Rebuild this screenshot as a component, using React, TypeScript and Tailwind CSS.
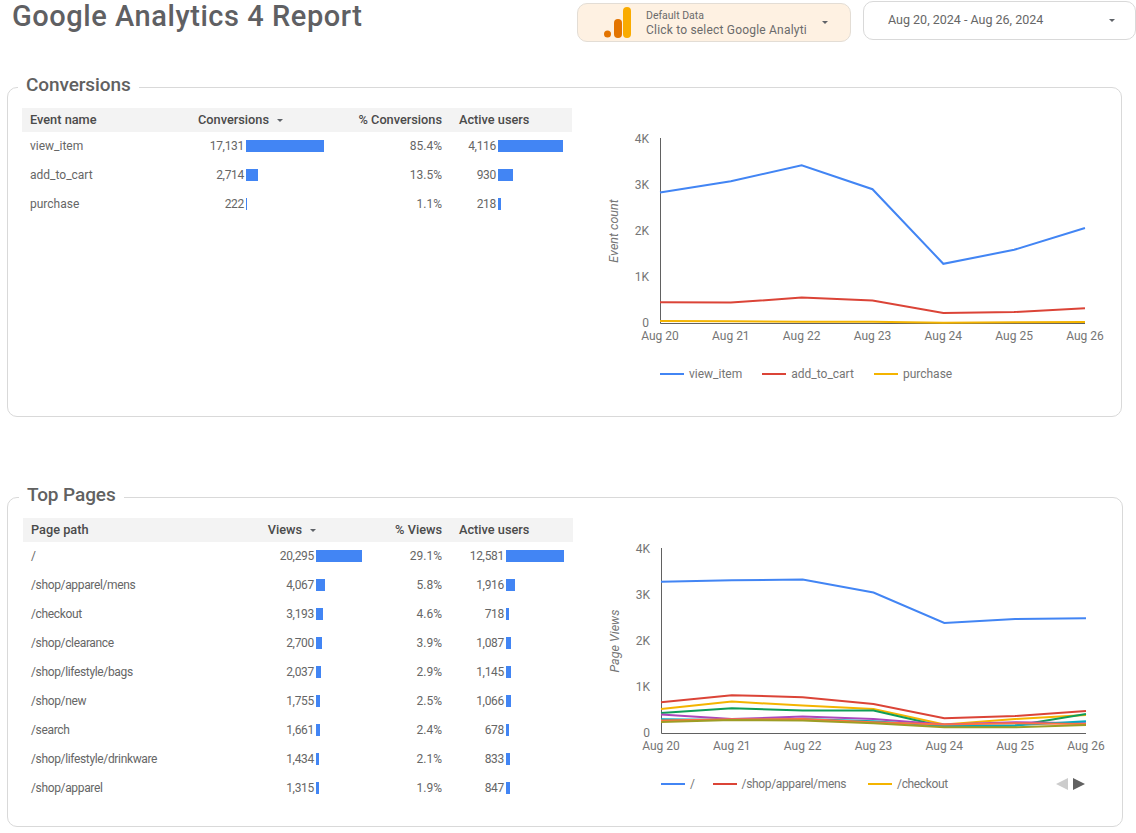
const font = "font-['Roboto','Liberation_Sans',sans-serif]";

const seriesColors = ['#4285f4', '#db4437', '#f4b400', '#0f9d58', '#ab47bc', '#00acc1', '#ff7043', '#9e9d24'];
const days = ['Aug 20', 'Aug 21', 'Aug 22', 'Aug 23', 'Aug 24', 'Aug 25', 'Aug 26'];
const ticks = ['4K', '3K', '2K', '1K', '0'];

const conversionRows = [
  { name: 'view_item', value: 17131, pct: '85.4%', users: 4116 },
  { name: 'add_to_cart', value: 2714, pct: '13.5%', users: 930 },
  { name: 'purchase', value: 222, pct: '1.1%', users: 218 },
];

const pageRows = [
  { name: '/', value: 20295, pct: '29.1%', users: 12581 },
  { name: '/shop/apparel/mens', value: 4067, pct: '5.8%', users: 1916 },
  { name: '/checkout', value: 3193, pct: '4.6%', users: 718 },
  { name: '/shop/clearance', value: 2700, pct: '3.9%', users: 1087 },
  { name: '/shop/lifestyle/bags', value: 2037, pct: '2.9%', users: 1145 },
  { name: '/shop/new', value: 1755, pct: '2.5%', users: 1066 },
  { name: '/search', value: 1661, pct: '2.4%', users: 678 },
  { name: '/shop/lifestyle/drinkware', value: 1434, pct: '2.1%', users: 833 },
  { name: '/shop/apparel', value: 1315, pct: '1.9%', users: 847 },
];

// y positions inside the chart svg, one per day
const conversionSeries = [
  [72.6, 61.2, 45.2, 69.2, 143.8, 129.8, 108],
  [182.3, 182.6, 177.6, 180.6, 193, 192, 188.3],
  [201, 201.3, 201.7, 201.7, 202.7, 202.3, 202],
];

const pageSeries = [
  [51.8, 50.2, 49.5, 62.5, 93, 89, 88.3],
  [172.2, 165.2, 167.2, 173.9, 188.3, 186, 180.9],
  [178.9, 171.6, 175.6, 178.9, 194.6, 189, 185],
  [183, 178.3, 180.6, 180.6, 196.7, 195.7, 184],
  [184.6, 189, 186.6, 189, 194.6, 192.3, 193.3],
  [189.3, 190, 189, 191.3, 196, 195.3, 191.3],
  [190.6, 189.3, 189, 192.3, 194.6, 193.3, 194],
  [192, 190, 190.6, 193.3, 197.3, 197.3, 195],
];

function Caret({ className = '' }: { className?: string }) {
  return (
    <svg width="6" height="3" viewBox="0 0 6 3" className={className}>
      <path d="M0 0h6L3 3z" fill="#5f6368" />
    </svg>
  );
}

function Bar({ value, max, full }: { value: number; max: number; full: number }) {
  return <div className="h-3 bg-[#4285f4]" style={{ width: Math.max(1, (value / max) * full) }} />;
}

type Row = { name: string; value: number; pct: string; users: number };

function ReportTable(props: {
  rows: Row[];
  nameLabel: string;
  valueLabel: string;
  pctLabel: string;
  headCols: string;
  rowCols: string;
  nameClass?: string;
  valueFull: number;
  usersFull: number;
}) {
  const maxValue = Math.max(...props.rows.map((r) => r.value));
  const maxUsers = Math.max(...props.rows.map((r) => r.users));
  return (
    <div className="w-[550px] shrink-0">
      <div className={`grid h-6 items-center bg-[#f3f3f3] text-[12.75px] font-medium text-[#4a4a4a] ${props.headCols}`}>
        <div className="pl-2">{props.nameLabel}</div>
        <div className="flex items-center justify-end gap-2 pr-px">
          {props.valueLabel}
          <Caret />
        </div>
        <div className="text-right">{props.pctLabel}</div>
        <div className="pl-[17px]">Active users</div>
      </div>
      {props.rows.map((r) => (
        <div key={r.name} className={`grid h-[29px] items-start text-[12px] leading-7 text-[#666] ${props.rowCols}`}>
          <div className={`pl-2 ${props.nameClass ?? ''}`}>{r.name}</div>
          <div className="text-right tracking-[-0.3px]">{r.value.toLocaleString('en-US')}</div>
          <div className="pt-2 pl-[2px]">
            <Bar value={r.value} max={maxValue} full={props.valueFull} />
          </div>
          <div className="text-right">{r.pct}</div>
          <div className="text-right tracking-[-0.3px]">{r.users.toLocaleString('en-US')}</div>
          <div className="pt-2 pl-[2px]">
            <Bar value={r.users} max={maxUsers} full={props.usersFull} />
          </div>
        </div>
      ))}
    </div>
  );
}

function LineChart({ series, axisLabel }: { series: number[][]; axisLabel: string }) {
  const xAt = (i: number) => 60 + i * 70.83;
  return (
    <svg width="522" height="230" className="block">
      {ticks.map((t, i) => (
        <text key={t} x="49" y={19 + i * 46 + 4} textAnchor="end" fontSize="12" fill="#757575" fontFamily="Roboto">
          {t}
        </text>
      ))}
      {days.map((d, i) => (
        <text key={d} x={xAt(i)} y="220" textAnchor="middle" fontSize="12" fill="#757575" fontFamily="Roboto">
          {d}
        </text>
      ))}
      <text
        transform="translate(18 111) rotate(-90)"
        textAnchor="middle"
        fontSize="12.5"
        fontStyle="italic"
        fill="#757575"
        fontFamily="Roboto"
      >
        {axisLabel}
      </text>
      <path d="M60.5 18V203.5H485" fill="none" stroke="#616161" strokeWidth="1" />
      {series.map((ys, s) => (
        <polyline
          key={s}
          points={ys.map((y, i) => `${xAt(i)},${y}`).join(' ')}
          fill="none"
          stroke={seriesColors[s]}
          strokeWidth="2"
        />
      ))}
    </svg>
  );
}

function LegendItem({ color, label, className = '' }: { color: string; label: string; className?: string }) {
  return (
    <div className={`flex items-center gap-[5px] ${className}`}>
      <div className="h-[2px] w-6" style={{ backgroundColor: color }} />
      <span>{label}</span>
    </div>
  );
}

function Section(props: { title: string; className: string; titleClass: string; children: React.ReactNode }) {
  return (
    <section className={`relative ml-[7px] flex h-[330px] rounded-[10px] border border-[#d9d9d9] pt-5 ${props.className}`}>
      <h2
        className={`absolute top-[-15px] bg-white px-2 text-[19px] leading-6 font-medium tracking-[-0.1px] text-[#616161] ${props.titleClass}`}
      >
        {props.title}
      </h2>
      {props.children}
    </section>
  );
}

export default function App() {
  return (
    <div className={`h-[833px] w-[1136px] overflow-hidden bg-white ${font}`}>
      <header className="flex h-[87px] items-start">
        <h1 className="w-[577px] pl-3 text-[29px] leading-8 font-medium tracking-[0.55px] text-[#5f6063]">
          Google Analytics 4 Report
        </h1>
        <div className="mt-[3px] flex h-[39px] w-[274px] items-center rounded-[10px] border border-[#e3ddd5] bg-[#fef1e2] pl-[26px]">
          <svg width="28" height="31" viewBox="0 0 28 31" className="shrink-0">
            <circle cx="3.5" cy="27" r="3.5" fill="#e37400" />
            <rect x="10" y="12" width="8" height="19" rx="4" fill="#e37400" />
            <rect x="19" y="0" width="8" height="31" rx="4" fill="#f9ab00" />
          </svg>
          <div className="ml-[14px] w-[165px] pt-[2px] whitespace-nowrap text-[#6b6b6b]">
            <div className="text-[10.5px] leading-[13px]">Default Data</div>
            <div className="text-[12px] leading-[16px] tracking-[0.2px]">Click to select Google Analyti</div>
          </div>
          <Caret className="ml-[11px]" />
        </div>
        <div className="mt-[1px] ml-3 flex h-[39px] w-[273px] items-center rounded-[10px] border border-[#d9d9d9] pl-6 text-[12.5px] text-[#666]">
          <span className="w-[221px]">Aug 20, 2024 - Aug 26, 2024</span>
          <Caret />
        </div>
      </header>

      <Section title="Conversions" className="w-[1115px] pl-[14px]" titleClass="left-[10px]">
        <ReportTable
          rows={conversionRows}
          nameLabel="Event name"
          valueLabel="Conversions"
          pctLabel="% Conversions"
          headCols="grid-cols-[148px_114px_158px_1fr]"
          rowCols="grid-cols-[148px_74px_86px_112px_54px_1fr]"
          valueFull={78}
          usersFull={65}
        />
        <div className="mt-3 ml-7">
          <LineChart series={conversionSeries} axisLabel="Event count" />
          <div className="mt-4 flex h-4 items-center pl-[60px] text-[12px] text-[#757575]">
            <LegendItem color={seriesColors[0]} label="view_item" />
            <LegendItem color={seriesColors[1]} label="add_to_cart" className="ml-5" />
            <LegendItem color={seriesColors[2]} label="purchase" className="ml-5" />
          </div>
        </div>
      </Section>

      <Section title="Top Pages" className="mt-20 w-[1116px] pl-[15px]" titleClass="left-[11px]">
        <ReportTable
          rows={pageRows}
          nameLabel="Page path"
          valueLabel="Views"
          pctLabel="% Views"
          headCols="grid-cols-[197px_97px_125px_1fr]"
          rowCols="grid-cols-[197px_94px_56px_72px_62px_1fr]"
          nameClass="tracking-[-0.35px]"
          valueFull={46}
          usersFull={58}
        />
        <div className="mt-3 ml-7">
          <LineChart series={pageSeries} axisLabel="Page Views" />
          <div className="mt-4 flex h-4 w-[485px] items-center pl-[60px] text-[12px] tracking-[-0.35px] text-[#757575]">
            <LegendItem color={seriesColors[0]} label="/" />
            <LegendItem color={seriesColors[1]} label="/shop/apparel/mens" className="ml-[18px]" />
            <LegendItem color={seriesColors[2]} label="/checkout" className="ml-[22px]" />
            <svg width="30" height="12" viewBox="0 0 30 12" className="ml-auto">
              <path d="M12 0v12L0 6z" fill="#ccc" />
              <path d="M17 0v12l12-6z" fill="#616161" />
            </svg>
          </div>
        </div>
      </Section>
    </div>
  );
}
